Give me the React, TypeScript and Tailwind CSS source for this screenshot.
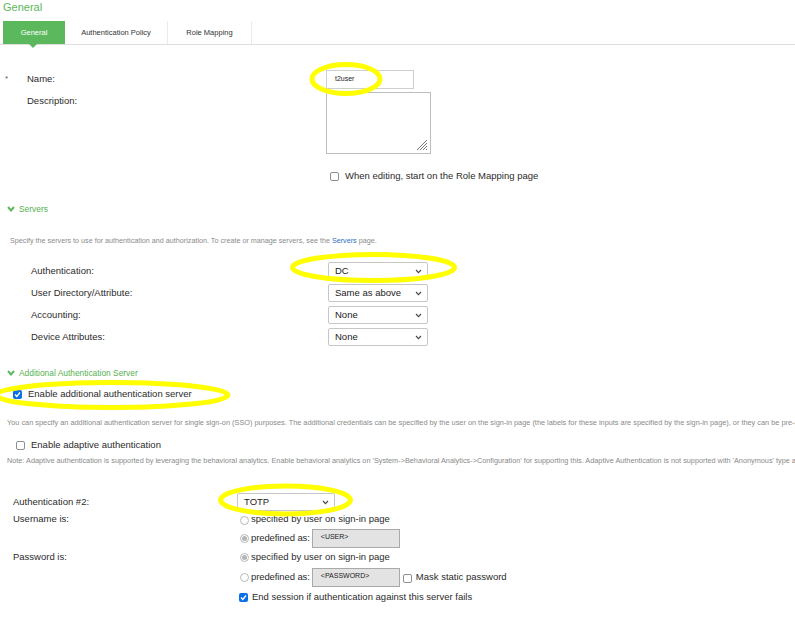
import React from 'react';

const Check = ({ on }: { on?: boolean }) =>
  on ? (
    <span className="flex h-[9px] w-[9px] shrink-0 items-center justify-center rounded-[2px] bg-[#0b6fe8]">
      <svg width="7" height="7" viewBox="0 0 7 7">
        <polyline points="1,3.6 2.8,5.4 6,1.5" fill="none" stroke="#fff" strokeWidth="1.4" />
      </svg>
    </span>
  ) : (
    <span className="block h-[9px] w-[9px] shrink-0 rounded-[2px] border border-[#8f8f8f] bg-white" />
  );

const Radio = ({ on }: { on?: boolean }) => (
  <span className="flex h-[9px] w-[9px] shrink-0 items-center justify-center rounded-full border border-[#b8b8b8] bg-white">
    {on && <span className="h-[5px] w-[5px] rounded-full bg-[#b5b5b5]" />}
  </span>
);

const Select = ({ value, className }: { value: string; className: string }) => (
  <div
    className={`flex h-[18px] items-center justify-between rounded-[2px] border border-[#c6c6c6] bg-white pl-[6px] pr-[5px] text-[9.5px] text-[#222] ${className}`}
  >
    <span>{value}</span>
    <svg width="7" height="5" viewBox="0 0 7 5">
      <polyline points="1,1 3.5,3.6 6,1" fill="none" stroke="#444" strokeWidth="1.1" />
    </svg>
  </div>
);

const Chevron = () => (
  <svg width="8" height="6" viewBox="0 0 8 6">
    <polyline points="1,1 4,4.4 7,1" fill="none" stroke="#5cb85c" strokeWidth="2" />
  </svg>
);

const Section = ({ title }: { title: string }) => (
  <div className="flex h-[12px] items-center gap-[4px] pl-[7px] text-[8.4px] text-[#55b24f]">
    <Chevron />
    <span>{title}</span>
  </div>
);

export default function App() {
  return (
    <div className="relative h-[621px] w-[795px] overflow-hidden bg-white font-['Liberation_Sans',Arial,sans-serif] text-[#2b2b2b]">
      {/* Title */}
      <div className="h-[21px] pl-[3px] pt-[1px] text-[11px] leading-[13px] text-[#5cb85c]">General</div>

      {/* Tabs */}
      <div className="flex h-[24px] border-b border-[#dedede] text-[7.5px]">
        <div className="relative ml-[3px] flex w-[62px] items-center justify-center bg-[#5cb85c] text-white">
          General
          <span className="absolute left-[26px] top-full z-10 h-0 w-0 border-l-[4px] border-r-[4px] border-t-[4px] border-l-transparent border-r-transparent border-t-[#5cb85c]" />
        </div>
        <div className="flex w-[103px] items-center justify-center border-r border-[#ebebeb] text-[#333]">
          Authentication Policy
        </div>
        <div className="flex w-[84px] items-center justify-center border-r border-[#ebebeb] text-[#333]">
          Role Mapping
        </div>
      </div>

      {/* Name / description */}
      <div className="mt-[25px] flex h-[19px] items-center text-[9.5px]">
        <span className="w-[27px] self-start pl-[5px] pt-[3px] text-[8px] text-[#555]">*</span>
        <span className="w-[299px]">Name:</span>
        <div className="flex h-[19px] w-[88px] items-center border border-[#cfcfcf] pl-[8px] text-[7px] text-[#222]">
          t2user
        </div>
      </div>
      <div className="mt-[3px] flex text-[9.5px]">
        <span className="w-[326px] pl-[27px] pt-[2px]">Description:</span>
        <div className="relative h-[62px] w-[105px] border border-[#bdbdbd]">
          <svg className="absolute bottom-[2px] right-[2px]" width="12" height="12" viewBox="0 0 12 12">
            <path d="M11 1 L1 11 M11 4 L4 11 M11 7 L7 11 M11 10 L10 11" stroke="#777" strokeWidth="1" />
          </svg>
        </div>
      </div>
      <div className="mt-[16px] flex h-[12px] items-center gap-[6px] pl-[330px] text-[9.5px]">
        <Check />
        <span>When editing, start on the Role Mapping page</span>
      </div>

      {/* Servers */}
      <div className="mt-[21px]">
        <Section title="Servers" />
      </div>
      <div className="mt-[21px] flex h-[10px] items-center pl-[10px] text-[7.2px] text-[#8a8a8a]">
        <span>
          Specify the servers to use for authentication and authorization. To create or manage servers, see the{' '}
          <span className="text-[#2a6fc4]">Servers</span> page.
        </span>
      </div>
      <div className="mt-[16px] flex flex-col gap-[4px] text-[9.5px]">
        {[
          ['Authentication:', 'DC'],
          ['User Directory/Attribute:', 'Same as above'],
          ['Accounting:', 'None'],
          ['Device Attributes:', 'None'],
        ].map(([label, value]) => (
          <div key={label} className="flex h-[18px] items-center">
            <span className="w-[328px] pl-[31px]">{label}</span>
            <Select value={value} className="w-[100px]" />
          </div>
        ))}
      </div>

      {/* Additional Authentication Server */}
      <div className="mt-[21px]">
        <Section title="Additional Authentication Server" />
      </div>
      <div className="mt-[9px] flex h-[12px] items-center gap-[6px] pl-[13px] text-[9.5px]">
        <Check on />
        <span>Enable additional authentication server</span>
      </div>
      <div className="mt-[18px] flex h-[8px] items-center whitespace-nowrap pl-[7px] text-[7.35px] text-[#8a8a8a]">
        You can specify an additional authentication server for single sign-on (SSO) purposes. The additional credentials can be specified by the user on the sign-in page (the labels for these inputs are specified by the sign-in page), or they can be pre-defined here.
      </div>
      <div className="mt-[13px] flex h-[12px] items-center gap-[6px] pl-[16px] text-[9.5px]">
        <Check />
        <span>Enable adaptive authentication</span>
      </div>
      <div className="mt-[6px] flex h-[8px] items-center whitespace-nowrap pl-[7px] text-[7.3px] text-[#8a8a8a]">
        Note: Adaptive authentication is supported by leveraging the behavioral analytics. Enable behavioral analytics on 'System-&gt;Behavioral Analytics-&gt;Configuration' for supporting this. Adaptive Authentication is not supported with 'Anonymous' type authentication servers.
      </div>

      {/* Authentication #2 */}
      <div className="mt-[28px] grid grid-cols-[237px_1fr] text-[9.5px]">
        <span className="flex h-[18px] items-center pl-[13px]">Authentication #2:</span>
        <div className="h-[18px]">
          <Select value="TOTP" className="w-[98px]" />
        </div>

        <span className="mt-[2px] flex h-[12px] items-center pl-[13px]">Username is:</span>
        <div className="mt-[2px] flex h-[12px] items-center gap-[2px] pl-[3px]">
          <span className="flex pt-[2px]"><Radio /></span>
          <span>specified by user on sign-in page</span>
        </div>

        <span />
        <div className="mt-[4px] flex h-[19px] items-center gap-[2px] pl-[3px]">
          <Radio on />
          <span className="tracking-[-0.1px]">predefined as:</span>
          <div className="flex h-[19px] w-[88px] items-center border border-[#a9a9a9] bg-[#e3e3e3] pb-[2px] pl-[8px] text-[7px] text-[#222]">
            &lt;USER&gt;
          </div>
        </div>

        <span className="mt-[3px] flex h-[12px] items-center pl-[13px]">Password is:</span>
        <div className="mt-[3px] flex h-[12px] items-center gap-[2px] pl-[3px]">
          <Radio on />
          <span>specified by user on sign-in page</span>
        </div>

        <span />
        <div className="mt-[5px] flex h-[19px] items-center gap-[2px] pl-[3px]">
          <Radio />
          <span className="tracking-[-0.1px]">predefined as:</span>
          <div className="flex h-[19px] w-[88px] items-center border border-[#a9a9a9] bg-[#e3e3e3] pb-[2px] pl-[8px] text-[7px] text-[#222]">
            &lt;PASSWORD&gt;
          </div>
          <span className="ml-[1px] mr-[2px] flex pt-[2px]"><Check /></span>
          <span>Mask static password</span>
        </div>

        <span />
        <div className="mt-[4px] flex h-[12px] items-center gap-[4px] pl-[2px]">
          <Check on />
          <span>End session if authentication against this server fails</span>
        </div>
      </div>

      {/* Yellow highlight annotations */}
      <svg className="pointer-events-none absolute left-0 top-0" width="795" height="621">
        <g fill="none" stroke="#ffff00" strokeWidth="5">
          <ellipse cx="346" cy="79" rx="34" ry="14.5" />
          <ellipse cx="373.5" cy="267.5" rx="81" ry="13" />
          <ellipse cx="112" cy="395" rx="116" ry="12.5" />
          <ellipse cx="285.5" cy="500" rx="65" ry="14" />
        </g>
      </svg>
    </div>
  );
}
